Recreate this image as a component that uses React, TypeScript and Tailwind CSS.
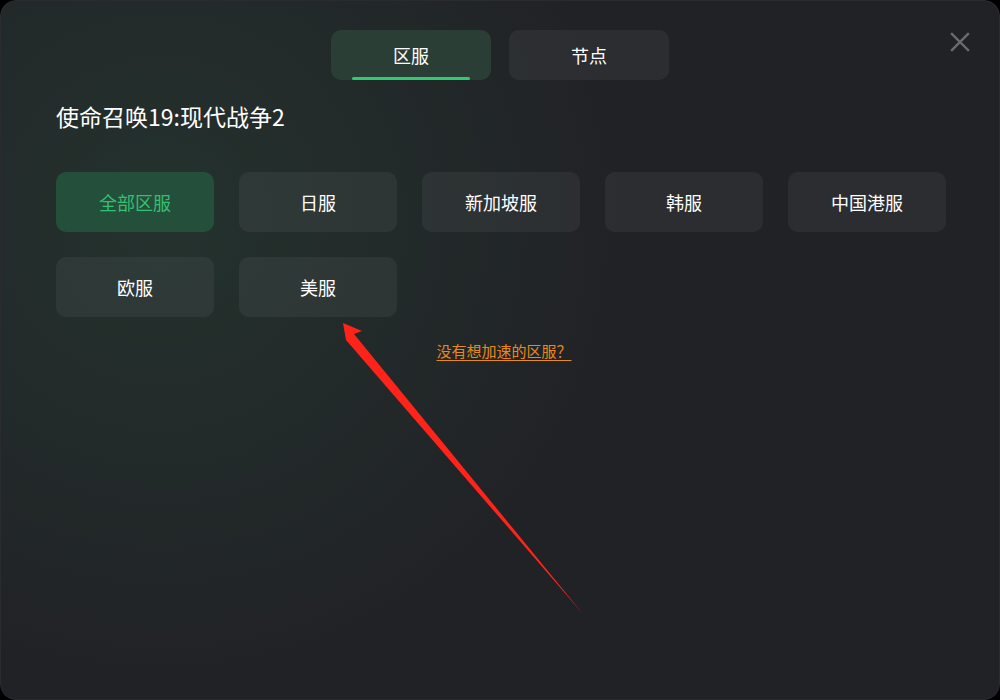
import React from "react";

const regions = ["全部区服", "日服", "新加坡服", "韩服", "中国港服", "欧服", "美服"];

export default function App() {
  return (
    <div className="w-[1000px] h-[700px] bg-black">
      <div
        className="relative w-[1000px] h-[700px] rounded-[16px] overflow-hidden bg-[#212226] border border-[#2a2b2f]"
        style={{
          fontFamily: '"Noto Sans CJK SC", "Noto Sans", sans-serif',
          backgroundImage:
            "radial-gradient(ellipse 460px 460px at 160px 220px, rgba(40,70,55,0.45), rgba(33,34,38,0) 100%)",
        }}
      >
        <button className="absolute right-[28px] top-[30px] w-[22px] h-[22px] flex items-center justify-center">
          <svg width="20" height="20" viewBox="0 0 20 20">
            <path d="M2 2 L18 18 M18 2 L2 18" stroke="#6b6c70" strokeWidth="2.4" strokeLinecap="square" />
          </svg>
        </button>

        <div className="flex justify-center gap-[18px] pt-[29px]">
          <div className="relative w-[160px] h-[50px] rounded-[10px] bg-[#2b3e36] flex items-center justify-center text-[18px] text-white">
            区服
            <div className="absolute bottom-0 left-[21px] right-[21px] h-[3px] rounded-full bg-[#2ecc71]" />
          </div>
          <div className="w-[160px] h-[50px] rounded-[10px] bg-white/5 flex items-center justify-center text-[18px] text-white">
            节点
          </div>
        </div>

        <div className="pl-[55px] pr-[53px]">
          <div className="mt-[21px] text-[23px] leading-[30px] text-white">使命召唤19:现代战争2</div>

          <div className="mt-[41px] grid grid-cols-5 gap-x-[25px] gap-y-[25px]">
            {regions.map((r, i) => (
              <div
                key={r}
                className={
                  i === 0
                    ? "h-[60px] rounded-[10px] bg-[#244f3b] flex items-center justify-center text-[18px] text-[#34c071]"
                    : "h-[60px] rounded-[10px] bg-white/5 flex items-center justify-center text-[18px] text-white"
                }
              >
                {r}
              </div>
            ))}
          </div>

          <div className="mt-[24px] flex justify-center">
            <span className="ml-[6px] text-[15px] leading-[20px] text-[#e8891c] underline underline-offset-[3px]">
              没有想加速的区服？
            </span>
          </div>
        </div>

        <svg className="absolute left-0 top-0 pointer-events-none" width="1000" height="700">
          <polygon points="342,322 361,330 353,333 582,613 345,339 346,345" fill="#ff2419" />
        </svg>
      </div>
    </div>
  );
}
